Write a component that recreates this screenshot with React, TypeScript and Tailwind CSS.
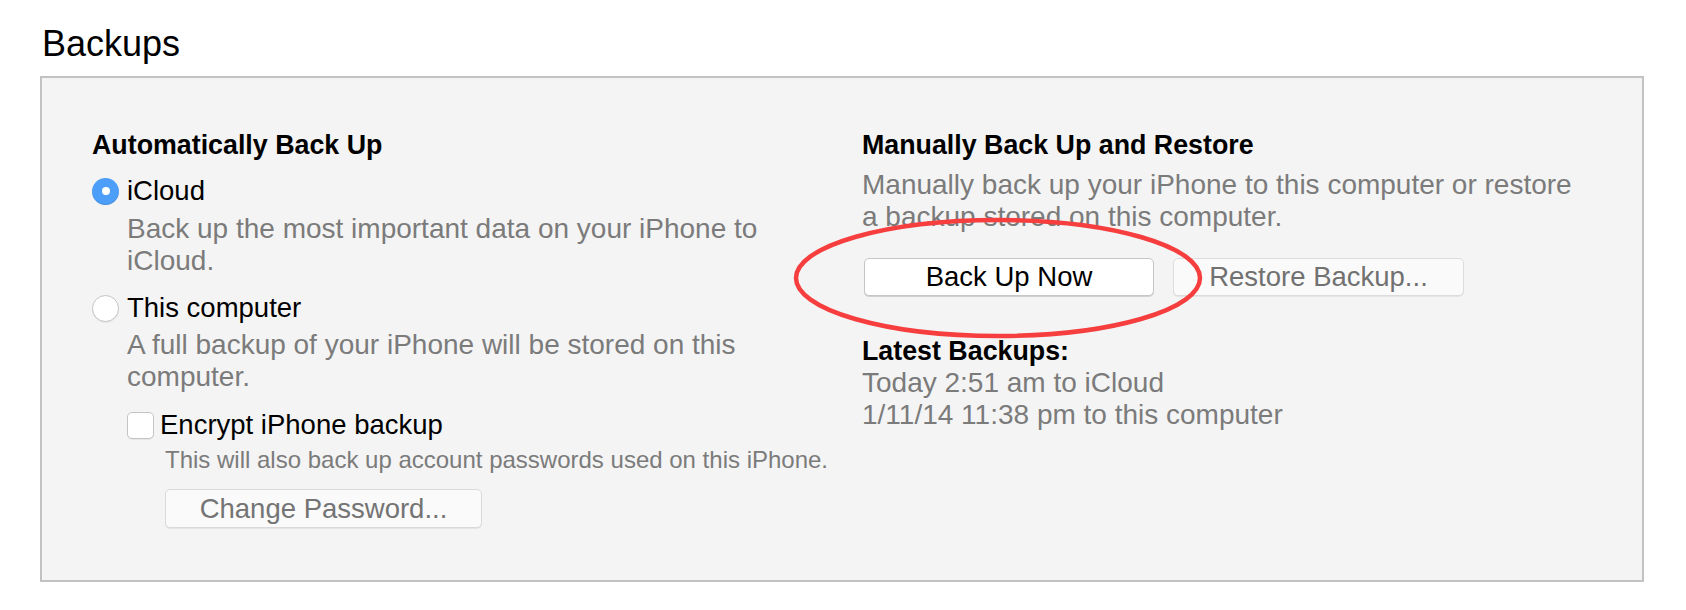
export default function App() {
  return (
    <div className="relative w-[1686px] h-[610px] bg-white text-black font-['Liberation_Sans',Arial,sans-serif]">
      <div className="px-[40px] pt-[24px]">
        <h1 className="ml-[2px] text-[36px] leading-[40px] font-normal">Backups</h1>
        <div className="mt-[12px] flex w-[1604px] h-[506px] border-2 border-[#c2c2c2] bg-[#f4f4f4] pl-[50px] pt-[51px]">
          {/* left column */}
          <div className="w-[770px]">
            <h2 className="text-[26.8px] font-bold leading-[32px]">Automatically Back Up</h2>

            <div className="mt-[14px] flex h-[32px] items-center gap-[8px]">
              <span className="flex h-[27px] w-[27px] items-center justify-center rounded-full bg-[#4c9ef8] shadow-[inset_0_-1px_0_rgba(0,0,0,0.12)]">
                <span className="h-[8px] w-[8px] rounded-full bg-white" />
              </span>
              <span className="text-[27.5px] leading-[32px]">iCloud</span>
            </div>
            <p className="mt-[6px] pl-[35px] text-[28px] leading-[32px] text-[#7b7b7b] whitespace-nowrap">
              Back up the most important data on your iPhone to
              <br />
              iCloud.
            </p>

            <div className="mt-[15px] flex h-[32px] items-center gap-[8px]">
              <span className="h-[27px] w-[27px] rounded-full border border-[#c4c4c4] bg-white shadow-[0_1px_0_rgba(0,0,0,0.05)]" />
              <span className="text-[27.5px] leading-[32px]">This computer</span>
            </div>
            <p className="mt-[5px] pl-[35px] text-[28px] leading-[32px] text-[#7b7b7b] whitespace-nowrap">
              A full backup of your iPhone will be stored on this
              <br />
              computer.
            </p>

            <div className="mt-[16px] ml-[35px] flex h-[32px] items-center gap-[6px]">
              <span className="h-[27px] w-[27px] rounded-[5px] border border-[#c4c4c4] bg-white shadow-[0_1px_0_rgba(0,0,0,0.05)]" />
              <span className="text-[27.5px] leading-[32px]">Encrypt iPhone backup</span>
            </div>
            <p className="mt-[5px] pl-[73px] text-[24px] leading-[28px] text-[#7b7b7b] whitespace-nowrap">
              This will also back up account passwords used on this iPhone.
            </p>
            <button className="mt-[15px] ml-[73px] flex h-[39px] w-[317px] items-center justify-center rounded-[5px] border border-[#dadada] bg-[#fafafa] text-[27.5px] text-[#747474] shadow-[0_1px_0_rgba(0,0,0,0.06)]">
              Change Password...
            </button>
          </div>

          {/* right column */}
          <div className="flex-1">
            <h2 className="text-[26.8px] font-bold leading-[32px]">Manually Back Up and Restore</h2>
            <p className="mt-[8px] text-[28px] leading-[32px] text-[#7b7b7b] whitespace-nowrap">
              Manually back up your iPhone to this computer or restore
              <br />
              a backup stored on this computer.
            </p>
            <div className="mt-[25px] ml-[2px] flex gap-[19px]">
              <button className="flex h-[38px] w-[290px] items-center justify-center rounded-[5px] border border-[#c6c6c6] bg-white text-[27.5px] text-black shadow-[0_1px_0_rgba(0,0,0,0.14)]">
                Back Up Now
              </button>
              <button className="flex h-[38px] w-[291px] items-center justify-center rounded-[5px] border border-[#dcdcdc] bg-[#fafafa] text-[27.5px] text-[#717171] shadow-[0_1px_0_rgba(0,0,0,0.06)]">
                Restore Backup...
              </button>
            </div>
            <h3 className="mt-[39px] text-[26.8px] font-bold leading-[32px]">Latest Backups:</h3>
            <p className="text-[28px] leading-[32px] text-[#7b7b7b] whitespace-nowrap">
              Today 2:51 am to iCloud
              <br />
              1/11/14 11:38 pm to this computer
            </p>
          </div>
        </div>
      </div>

      {/* red annotation ring */}
      <svg
        className="pointer-events-none absolute left-[793px] top-[217px]"
        width="412"
        height="124"
        viewBox="0 0 412 124"
      >
        <ellipse cx="205" cy="61" rx="202" ry="58" fill="none" stroke="#f63e3e" strokeWidth="4.5" />
      </svg>
    </div>
  );
}
